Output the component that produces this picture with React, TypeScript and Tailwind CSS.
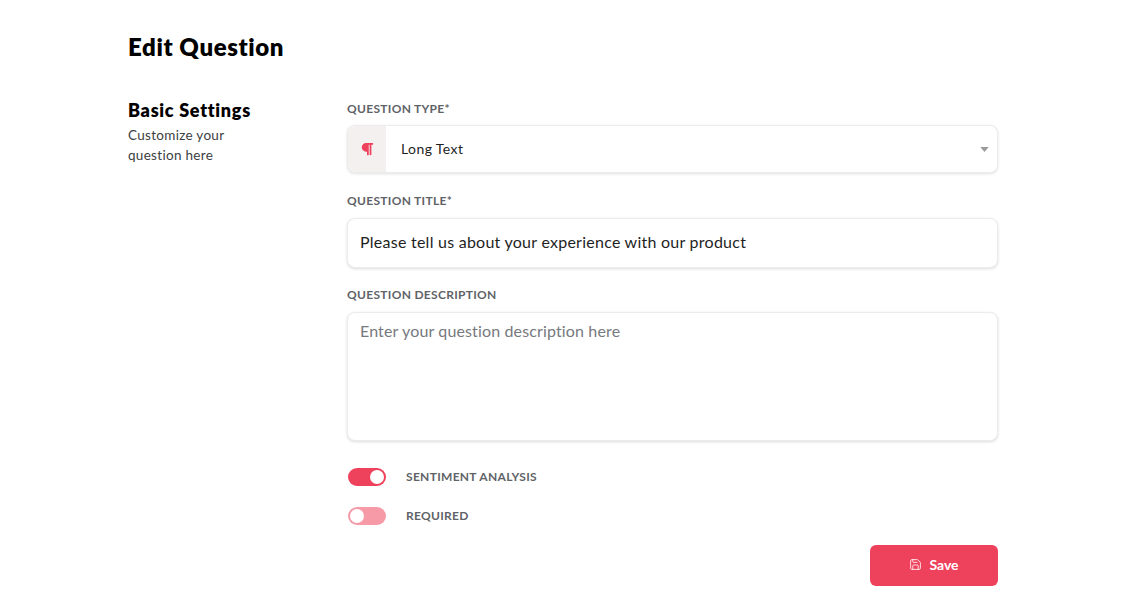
import { Save } from 'lucide-react'
import { FaParagraph } from 'react-icons/fa'

function FieldLabel({ children }: { children: React.ReactNode }) {
  return <label className="block text-[12px] leading-[16px] font-bold uppercase tracking-[0.3px] text-[#5f6368]">{children}</label>
}

function Toggle({ on }: { on: boolean }) {
  return (
    <div className={`ml-[1px] flex h-[18px] w-[38px] items-center rounded-full px-[2px] ${on ? 'justify-end bg-[#ee415c]' : 'justify-start bg-[#f79aa8]'}`}>
      <div className="h-[14px] w-[14px] rounded-full bg-white" />
    </div>
  )
}

export default function App() {
  return (
    <div className="h-[613px] w-[1121px] overflow-hidden bg-white pl-[128px] pt-[31px] font-['Lato',sans-serif] text-black">
      <h1 className="text-[24px] leading-[32px] font-extrabold tracking-[0.6px]">Edit Question</h1>

      <div className="mt-[38px] flex">
        <div className="w-[219px]">
          <h2 className="text-[18px] leading-[18px] font-extrabold tracking-[0.7px]">Basic Settings</h2>
          <p className="mt-[6px] w-[110px] text-[13.5px] leading-[20px] tracking-[0.3px] text-[#3c4043]">Customize your question here</p>
        </div>

        <div className="w-[651px]">
          <FieldLabel>QUESTION TYPE*</FieldLabel>
          <div className="mt-[8px] flex h-[48px] items-center overflow-hidden rounded-lg border border-[#ececec] bg-white shadow-[0_1px_3px_rgba(0,0,0,0.12)]">
            <div className="flex h-full w-[38px] items-center justify-center bg-[#f4f0f0] text-[#ee415c]">
              <FaParagraph className="h-[14px] w-[14px]" />
            </div>
            <span className="ml-[15px] pb-[2px] text-[14px] tracking-[0.4px] text-[#1f1f1f]">Long Text</span>
            <svg className="ml-auto mr-[8px] h-[5px] w-[9px]" viewBox="0 0 10 6">
              <path d="M0 0h10L5 6z" fill="#9a9a9a" />
            </svg>
          </div>

          <div className="mt-[20px]">
            <FieldLabel>QUESTION TITLE*</FieldLabel>
          </div>
          <div className="mt-[9px] flex h-[50px] items-center rounded-lg border border-[#ececec] bg-white px-[12px] pb-[2px] text-[16px] tracking-[0.25px] text-[#1f1f1f] shadow-[0_1px_3px_rgba(0,0,0,0.14)]">
            Please tell us about your experience with our product
          </div>

          <div className="mt-[19px]">
            <FieldLabel>QUESTION DESCRIPTION</FieldLabel>
          </div>
          <div className="mt-[9px] h-[129px] rounded-lg border border-[#ececec] bg-white px-[12px] pt-[6px] text-[16px] leading-[24px] tracking-[0.14px] text-[#76797e] shadow-[0_1px_3px_rgba(0,0,0,0.14)]">
            Enter your question description here
          </div>

          <div className="mt-[27px] flex items-center gap-[20px]">
            <Toggle on />
            <span className="text-[12px] font-bold tracking-[0.3px] text-[#5f6368]">SENTIMENT ANALYSIS</span>
          </div>
          <div className="mt-[21px] flex items-center gap-[20px]">
            <Toggle on={false} />
            <span className="text-[12px] font-bold tracking-[0.3px] text-[#5f6368]">REQUIRED</span>
          </div>

          <div className="mt-[20px] flex justify-end">
            <button className="flex h-[41px] w-[128px] items-center justify-center gap-[7px] rounded-md bg-[#ee415c] pb-[2px] text-[14px] font-bold text-white">
              <Save className="h-[13px] w-[13px]" strokeWidth={1.5} />
              Save
            </button>
          </div>
        </div>
      </div>
    </div>
  )
}
